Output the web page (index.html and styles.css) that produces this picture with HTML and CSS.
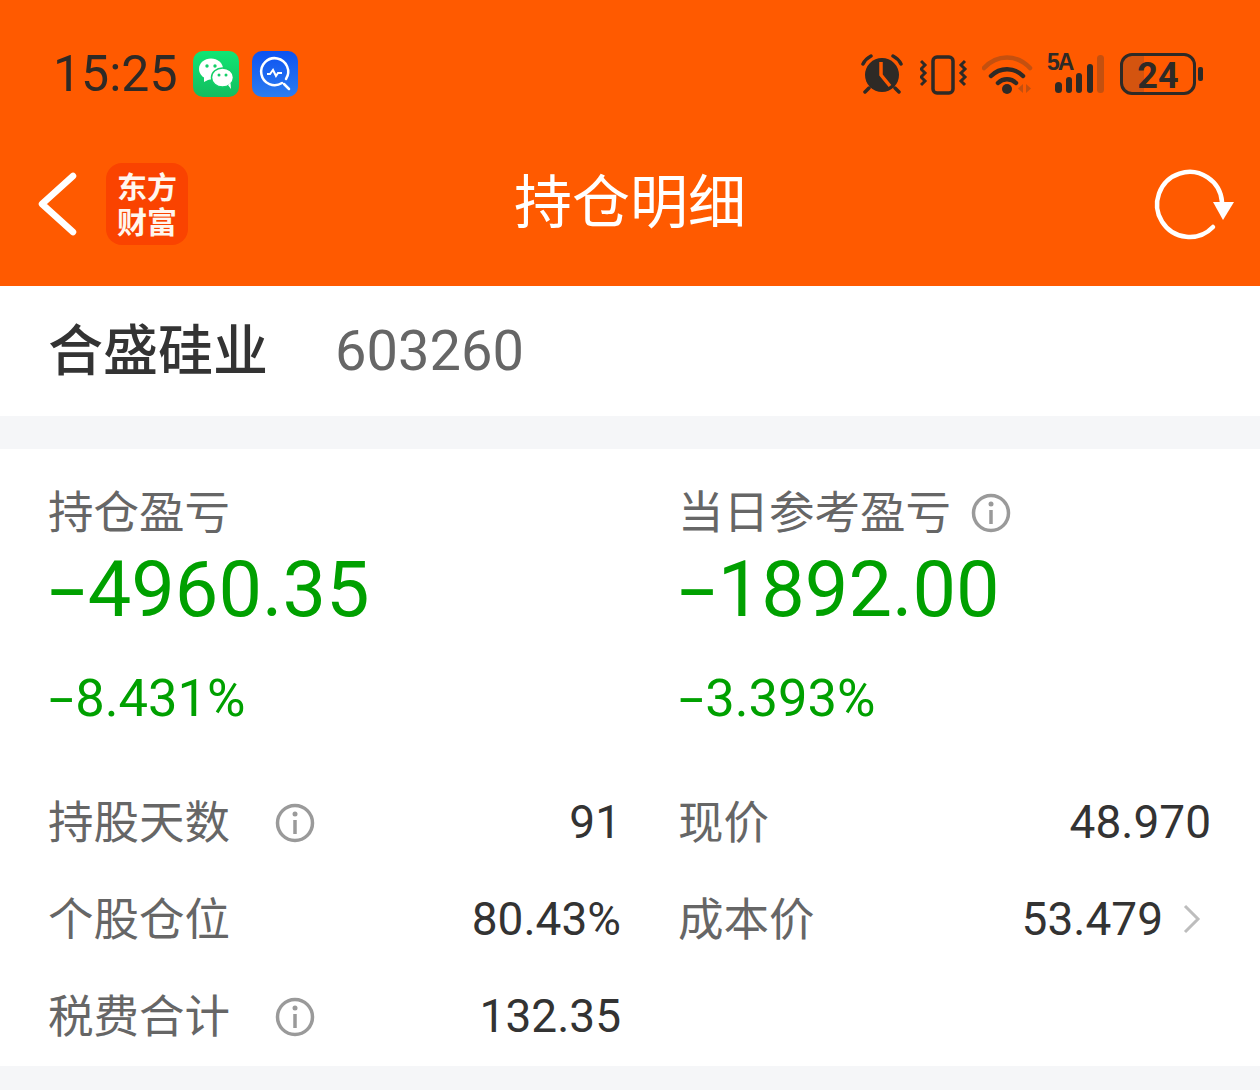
FILE: index.html
```html
<!DOCTYPE html>
<html>
<head>
    <meta charset="utf-8">
    <title>持仓明细</title>
    <link rel="stylesheet" href="styles.css">
</head>
<body>
<div class="head">
    <div class="status">
        <span class="time">15:25</span>
        <svg class="app" width="46" height="46" viewBox="0 0 46 46">
            <defs>
                <linearGradient id="wx" x1="0" y1="0" x2="0" y2="1"><stop offset="0" stop-color="#10e574"/><stop offset="1" stop-color="#13bd5e"/></linearGradient>
                <linearGradient id="bl" x1="0" y1="0" x2="0" y2="1"><stop offset="0" stop-color="#0d52f2"/><stop offset="1" stop-color="#2c7df0"/></linearGradient>
            </defs>
            <rect width="46" height="46" rx="10" fill="url(#wx)"/>
            <ellipse cx="18" cy="18" rx="12" ry="10.500" fill="#fff"/>
            <path d="M11 25l0 6 6-3z" fill="#fff"/>
            <ellipse cx="29.500" cy="26.500" rx="11" ry="9.500" fill="#fff" stroke="#14cf68" stroke-width="1.500"/>
            <path d="M35 34l3 4-.5-6z" fill="#fff"/>
            <circle cx="14" cy="15" r="1.700" fill="#14cf68"/>
            <circle cx="22" cy="15" r="1.700" fill="#14cf68"/>
            <circle cx="26" cy="24" r="1.500" fill="#14cf68"/>
            <circle cx="33" cy="24" r="1.500" fill="#14cf68"/>
        </svg>
        <svg class="app" width="46" height="46" viewBox="0 0 46 46">
            <rect width="46" height="46" rx="10" fill="url(#bl)"/>
            <path d="M30 32A13.500 13.500 0 1 1 34 28" fill="none" stroke="#fff" stroke-width="2.500" stroke-linecap="round"/>
            <path d="M15 23h3l3-4 3 6 2-3h4" fill="none" stroke="#fff" stroke-width="2"/>
            <path d="M32 33l5 5" stroke="#fff" stroke-width="2.500" stroke-linecap="round"/>
        </svg>
        <div class="sys">
            <svg width="45" height="42" viewBox="0 0 45 42">
                <circle cx="21" cy="22" r="17" fill="#2e2a26"/>
                <path d="M20 9v13l9 11" fill="none" stroke="#ff5a00" stroke-width="3.500"/>
                <path d="M2 11c2-4 4-6 8-8M40 11c-2-4-4-6-8-8M8 35l-4 4M34 35l4 4" fill="none" stroke="#2e2a26" stroke-width="3.500" stroke-linecap="round"/>
            </svg>
            <svg width="48" height="42" viewBox="0 0 48 42">
                <rect x="13" y="4" width="20" height="36" rx="4" fill="none" stroke="#2e2a26" stroke-width="3.500"/>
                <path d="M1 8l4 4-4 4 4 4-4 4 4 4-4 4M45 8l-4 4 4 4-4 4 4 4-4 4 4 4" fill="none" stroke="#2e2a26" stroke-width="3"/>
            </svg>
            <svg width="52" height="42" viewBox="0 0 52 42">
                <path d="M2 15c13-14 33-14 46 0" fill="none" stroke="#c4500f" stroke-width="4.500" stroke-linecap="round"/>
                <path d="M9 23c9-9 23-9 32 0M16 30c5-5 13-5 18 0" fill="none" stroke="#2e2a26" stroke-width="4.500" stroke-linecap="round"/>
                <circle cx="25" cy="36" r="5" fill="#2e2a26"/>
                <path d="M41 31v9l-5-4.500zM44 31v9l5-4.500z" fill="#c4500f"/>
            </svg>
            <div class="signal">
                <span class="fiveg">5A</span>
                <svg width="58" height="42" viewBox="0 0 58 42">
                    <rect x="7" y="29" width="7" height="11" rx="3.500" fill="#2e2a26"/>
                    <rect x="18" y="24" width="6" height="16" rx="3" fill="#2e2a26"/>
                    <rect x="28" y="20" width="6" height="20" rx="3" fill="#2e2a26"/>
                    <rect x="39" y="11" width="6" height="29" rx="3" fill="#2e2a26"/>
                    <rect x="49" y="2" width="7" height="38" rx="3.500" fill="#c4500f"/>
                </svg>
            </div>
            <div class="batt"><span>24</span></div>
            <i class="nub"></i>
        </div>
    </div>
    <div class="bar">
        <svg class="back" width="40" height="66" viewBox="0 0 40 66">
            <path d="M36 5L5 33l31 28" fill="none" stroke="#fff" stroke-width="6.500" stroke-linecap="round" stroke-linejoin="round"/>
        </svg>
        <div class="logo">
            <div>东方</div>
            <div>财富</div>
        </div>
        <h1>持仓明细</h1>
        <svg class="refresh" width="84" height="76" viewBox="0 0 84 76">
            <path d="M72 36A32.500 32.500 0 1 0 63 61" fill="none" stroke="#fff" stroke-width="4.500" stroke-linecap="round"/>
            <path d="M63 36h21L73 54z" fill="#fff"/>
        </svg>
    </div>
</div>
<div class="stock">
    <span class="name">合盛硅业</span>
    <span class="code">603260</span>
</div>
<div class="card">
    <div class="sum">
        <div class="col">
            <div class="lab">持仓盈亏</div>
            <div class="big"><span class="minus">-</span>4960.35</div>
            <div class="pct"><span class="minus">-</span>8.431%</div>
        </div>
        <div class="col">
            <div class="lab">当日参考盈亏
                <svg class="info" width="40" height="40" viewBox="0 0 40 40"><circle cx="20" cy="20" r="17.500" fill="none" stroke="#9a9a9a" stroke-width="3.500"/><circle cx="20" cy="11" r="2.500" fill="#9a9a9a"/><path d="M20 17v14" stroke="#9a9a9a" stroke-width="3.500"/></svg>
            </div>
            <div class="big"><span class="minus">-</span>1892.00</div>
            <div class="pct"><span class="minus">-</span>3.393%</div>
        </div>
    </div>
    <div class="rows">
        <div class="row">
            <span class="lab">持股天数
                <svg class="info wide" width="40" height="40" viewBox="0 0 40 40"><circle cx="20" cy="20" r="17.500" fill="none" stroke="#9a9a9a" stroke-width="3.500"/><circle cx="20" cy="11" r="2.500" fill="#9a9a9a"/><path d="M20 17v14" stroke="#9a9a9a" stroke-width="3.500"/></svg>
            </span>
            <span class="val">91</span>
        </div>
        <div class="row">
            <span class="lab">现价</span>
            <span class="val">48.970</span>
        </div>
        <div class="row">
            <span class="lab">个股仓位</span>
            <span class="val">80.43%</span>
        </div>
        <div class="row">
            <span class="lab">成本价</span>
            <span class="val">53.479
                <svg class="more" width="18" height="30" viewBox="0 0 18 30"><path d="M2 2l13 13L2 28" fill="none" stroke="#bdbdbd" stroke-width="3"/></svg>
            </span>
        </div>
        <div class="row">
            <span class="lab">税费合计
                <svg class="info wide" width="40" height="40" viewBox="0 0 40 40"><circle cx="20" cy="20" r="17.500" fill="none" stroke="#9a9a9a" stroke-width="3.500"/><circle cx="20" cy="11" r="2.500" fill="#9a9a9a"/><path d="M20 17v14" stroke="#9a9a9a" stroke-width="3.500"/></svg>
            </span>
            <span class="val">132.35</span>
        </div>
    </div>
</div>
<div class="foot"></div>
</body>
</html>
```

FILE: styles.css
```css
* {
    box-sizing: border-box;
}
body {
    margin: 0;
    background: #f5f6f8;
    font-family: "Noto Sans CJK SC", "Noto Sans", sans-serif;
}
svg {
    display: block;
    flex: none;
}
.head {
    height: 286px;
    background: #ff5a00;
}
.status {
    display: flex;
    align-items: center;
    height: 148px;
    padding: 0 57px 0 53px;
    gap: 13px;
}
.time {
    margin-right: 2px;
    font-family: Roboto, sans-serif;
    font-size: 50px;
    color: #2e2a26;
}
.sys {
    display: flex;
    align-items: center;
    margin-left: auto;
    gap: 14px;
}
.signal {
    position: relative;
}
.fiveg {
    position: absolute;
    left: -1px;
    top: -4px;
    font: 700 23px "Liberation Sans", sans-serif;
    letter-spacing: -2px;
    color: #2e2a26;
}
.batt {
    width: 76px;
    height: 42px;
    border: 3px solid #2e2a26;
    border-radius: 12px;
    text-align: center;
    font: 700 36px/40px Roboto, sans-serif;
    color: #2e2a26;
    background: linear-gradient(to right, #d4540f 30%, transparent 30%);
}
.nub {
    width: 5px;
    height: 14px;
    margin-left: -12px;
    border-radius: 2px;
    background: #2e2a26;
}
.bar {
    display: flex;
    align-items: center;
    height: 112px;
    padding: 0 26px 0 37px;
}
.logo {
    width: 82px;
    height: 82px;
    margin-left: 29px;
    padding-top: 5px;
    border-radius: 16px;
    background: #fa4300;
    text-align: center;
    font-size: 30px;
    font-weight: 700;
    line-height: 35px;
    color: #fff6ee;
}
.bar h1 {
    flex: 1;
    margin: 0;
    text-align: center;
    font-size: 58px;
    font-weight: 400;
    color: #fff;
    padding: 0 78px 12px 0;
}
.stock {
    display: flex;
    align-items: center;
    height: 130px;
    padding: 0 0 6px 48px;
    gap: 67px;
    background: #fff;
}
.name {
    margin-bottom: 4px;
    font-size: 55px;
    font-weight: 500;
    color: #333;
}
.code {
    margin-top: 6px;
    font-family: Roboto, sans-serif;
    font-size: 56px;
    color: #666;
}
.card {
    height: 617px;
    margin-top: 33px;
    padding: 36px 49px 0;
    background: #fff;
}
.sum, .rows {
    display: grid;
    grid-template-columns: 572px 532px;
    column-gap: 58px;
}
.lab {
    display: flex;
    align-items: flex-start;
    height: 56px;
    margin-left: -1px;
    font-size: 45.5px;
    line-height: 48px;
    color: #666;
}
.info {
    margin: 8px 0 0 20px;
}
.info.wide {
    margin-left: 45px;
}
.big {
    margin-top: 4px;
    font-family: Roboto, sans-serif;
    font-size: 77.5px;
    line-height: 90px;
    color: #00a000;
}
.pct {
    margin-top: 32px;
    font-family: Roboto, sans-serif;
    font-size: 52.5px;
    line-height: 62px;
    color: #00a000;
}
.minus {
    display: inline-block;
    width: 0.5em;
    transform: scaleX(1.7);
    transform-origin: 0 50%;
}
.rows {
    margin-top: 66px;
    row-gap: 41px;
}
.row {
    display: flex;
    align-items: center;
    justify-content: space-between;
    height: 56px;
}
.val {
    display: flex;
    align-items: center;
    gap: 20px;
    margin-bottom: 2px;
    font-family: Roboto, sans-serif;
    font-size: 46px;
    color: #333;
}
.more {
    margin-right: 10px;
}
.foot {
    height: 25px;
}
```
